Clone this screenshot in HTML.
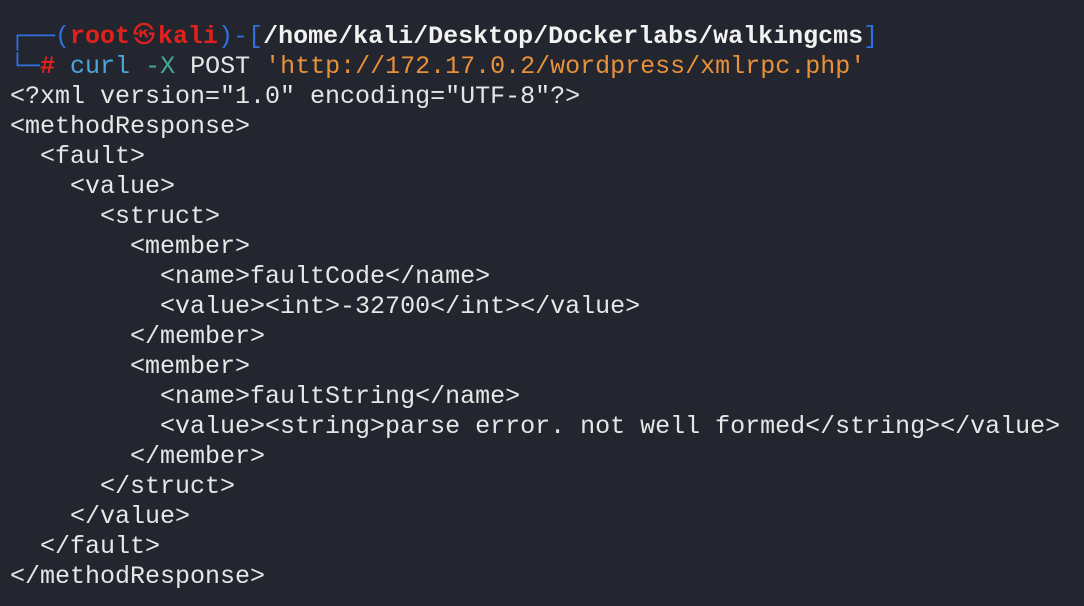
<!DOCTYPE html>
<html><head><style>
html,body{margin:0;padding:0;background:#23262f;width:1084px;height:606px;overflow:hidden}
pre{margin:0;padding:22px 0 0 10px;font-family:"Liberation Mono","DejaVu Sans Mono",monospace;font-size:25px;line-height:30px;color:#e6e6e6;white-space:pre}
.b{color:#2f6fe0}.r{color:#e3211c;font-weight:bold}.w{color:#f2f2f2;font-weight:bold}
.c{color:#4aa6dd}.g{color:#45a898}.o{color:#e8913a}
.s{display:inline-block;width:28px;overflow:hidden;font-size:22px;font-weight:normal;text-align:center;vertical-align:top}
</style></head><body><pre><span class="b">┌──(</span><span class="r">root<span class="s">㉿</span>kali</span><span class="b">)-[</span><span class="w">/home/kali/Desktop/Dockerlabs/walkingcms</span><span class="b">]</span>
<span class="b">└─</span><span class="r">#</span> <span class="c">curl</span> <span class="g">-X</span> POST <span class="o">'http://172.17.0.2/wordpress/xmlrpc.php'</span>
&lt;?xml version="1.0" encoding="UTF-8"?&gt;
&lt;methodResponse&gt;
  &lt;fault&gt;
    &lt;value&gt;
      &lt;struct&gt;
        &lt;member&gt;
          &lt;name&gt;faultCode&lt;/name&gt;
          &lt;value&gt;&lt;int&gt;-32700&lt;/int&gt;&lt;/value&gt;
        &lt;/member&gt;
        &lt;member&gt;
          &lt;name&gt;faultString&lt;/name&gt;
          &lt;value&gt;&lt;string&gt;parse error. not well formed&lt;/string&gt;&lt;/value&gt;
        &lt;/member&gt;
      &lt;/struct&gt;
    &lt;/value&gt;
  &lt;/fault&gt;
&lt;/methodResponse&gt;</pre></body></html>
